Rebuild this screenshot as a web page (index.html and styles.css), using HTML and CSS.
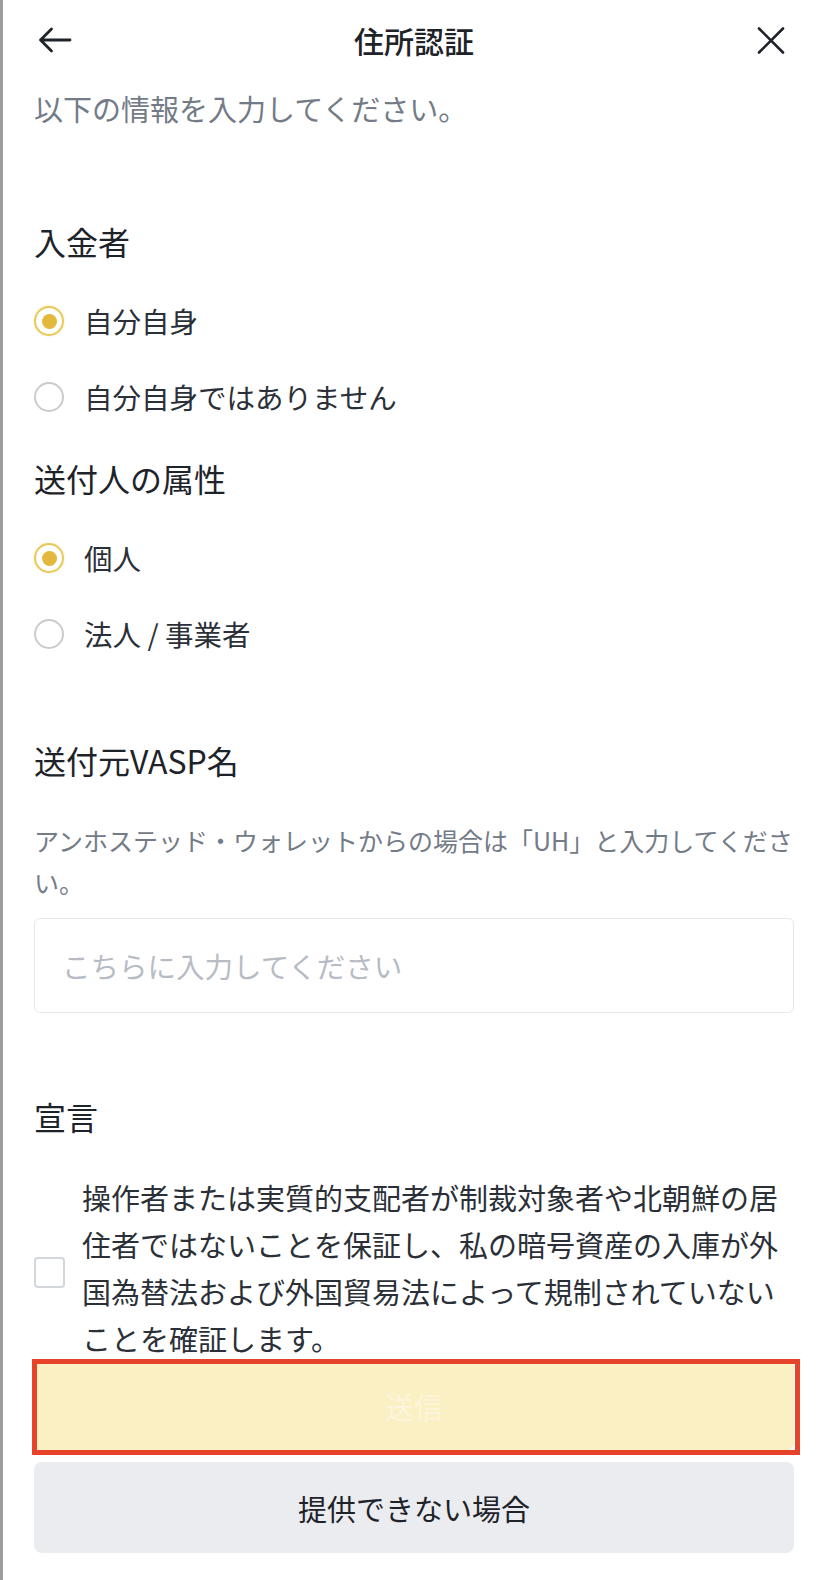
FILE: index.html
```html
<!DOCTYPE html>
<html lang="ja">
<head>
<meta charset="utf-8">
<title>住所認証</title>
<link rel="stylesheet" href="styles.css">
</head>
<body>
<div class="page">
  <header class="header">
    <span class="icon-btn back">
      <svg width="34" height="26" viewBox="0 0 34 26" fill="none" stroke="#1e2329" stroke-width="2.8" stroke-linecap="round" stroke-linejoin="round"><path d="M32 13H2.5M13.5 2L2.5 13l11 11"/></svg>
    </span>
    <h1 class="title">住所認証</h1>
    <span class="icon-btn close">
      <svg width="28" height="27" viewBox="0 0 28 27" fill="none" stroke="#1e2329" stroke-width="2.6" stroke-linecap="round"><path d="M2 1.5l24 24M26 1.5l-24 24"/></svg>
    </span>
  </header>

  <p class="subtitle">以下の情報を入力してください。</p>

  <h2 class="section-title first">入金者</h2>
  <div class="radio-list">
    <div class="radio-row"><span class="radio checked"></span><span class="radio-label">自分自身</span></div>
    <div class="radio-row"><span class="radio"></span><span class="radio-label">自分自身ではありません</span></div>
  </div>

  <h2 class="section-title">送付人の属性</h2>
  <div class="radio-list">
    <div class="radio-row"><span class="radio checked"></span><span class="radio-label">個人</span></div>
    <div class="radio-row"><span class="radio"></span><span class="radio-label">法人 / 事業者</span></div>
  </div>

  <h2 class="section-title vasp">送付元VASP名</h2>
  <p class="hint">アンホステッド・ウォレットからの場合は「UH」と入力してください。</p>
  <div class="input-box"><span class="placeholder">こちらに入力してください</span></div>

  <h2 class="section-title declare">宣言</h2>
  <div class="declare-row">
    <span class="checkbox"></span>
    <p class="declare-text">操作者または実質的支配者が制裁対象者や北朝鮮の居住者ではないことを保証し、私の暗号資産の入庫が外国為替法および外国貿易法によって規制されていないことを確証します。</p>
  </div>

  <div class="btn-wrap">
    <div class="btn btn-primary">送信</div>
    <span class="highlight"></span>
  </div>
  <div class="btn btn-secondary">提供できない場合</div>
</div>
</body>
</html>
```
FILE: styles.css
```css
* { box-sizing: border-box; margin: 0; padding: 0; }

html, body { background: #ffffff; }

body {
  font-family: "Noto Sans CJK JP", "Noto Sans", sans-serif;
  color: #1e2329;
}

.page {
  width: 824px;
  min-height: 1580px;
  border-left: 3px solid #9c9c9c;
  padding: 0 30px 0 31px;
}

.header {
  height: 80px;
  display: grid;
  grid-template-columns: 1fr auto 1fr;
  align-items: center;
}

.icon-btn { display: flex; align-items: center; }
.back { margin-left: 4px; justify-self: start; }
.close { margin-right: 9px; justify-self: end; }

.title {
  font-size: 30px;
  font-weight: 500;
  line-height: 40px;
}

.subtitle {
  margin-top: 8px;
  font-size: 29px;
  line-height: 40px;
  color: #737b87;
}

.section-title {
  font-size: 32px;
  font-weight: 400;
  line-height: 40px;
  margin-top: 23px;
  margin-bottom: 22px;
}
.section-title.first { margin-top: 93px; }
.section-title.vasp { margin-top: 68px; margin-bottom: 39px; }
.section-title.declare { margin-top: 83px; margin-bottom: 38px; }

.radio-row {
  height: 76px;
  display: flex;
  align-items: center;
  gap: 20px;
}

.radio {
  width: 30px;
  height: 30px;
  border-radius: 50%;
  border: 2px solid #c9cbcf;
  flex: none;
  display: flex;
  align-items: center;
  justify-content: center;
}
.radio.checked {
  border-color: #e9c955;
  box-shadow: 0 0 2px rgba(233, 201, 85, 0.5);
}
.radio.checked::after {
  content: "";
  width: 15px;
  height: 15px;
  border-radius: 50%;
  background: #e2b83d;
}

.radio-label {
  font-size: 28.5px;
  line-height: 40px;
  color: #2b3038;
}

.hint {
  font-size: 25px;
  line-height: 42px;
  color: #737b87;
  margin-right: -6px;
}

.input-box {
  margin-top: 15px;
  height: 95px;
  border: 1px solid #e6e8ea;
  border-radius: 6px;
  display: flex;
  align-items: center;
  padding-left: 27px;
}
.placeholder {
  font-size: 28.5px;
  color: #b7bcc4;
}

.declare-row {
  display: flex;
  align-items: center;
  gap: 17px;
}
.checkbox {
  flex: none;
  width: 31px;
  height: 31px;
  border: 2px solid #d3d6da;
  border-radius: 4px;
  margin-top: 8px;
}
.declare-text {
  font-size: 29px;
  line-height: 47px;
  color: #2b3038;
}

.btn-wrap {
  position: relative;
  margin-top: -1px;
}

.btn {
  height: 90px;
  border-radius: 8px;
  display: flex;
  align-items: center;
  justify-content: center;
  font-size: 29px;
}

.btn-primary {
  background: #fbf0c4;
  color: #fcf5dc;
}

.highlight {
  position: absolute;
  left: -2px;
  right: -6px;
  top: -2px;
  bottom: -4px;
  border: 5px solid #e6432a;
}

.btn-secondary {
  margin-top: 11px;
  height: 91px;
  background: #eaecef;
  color: #1e2329;
}
```
